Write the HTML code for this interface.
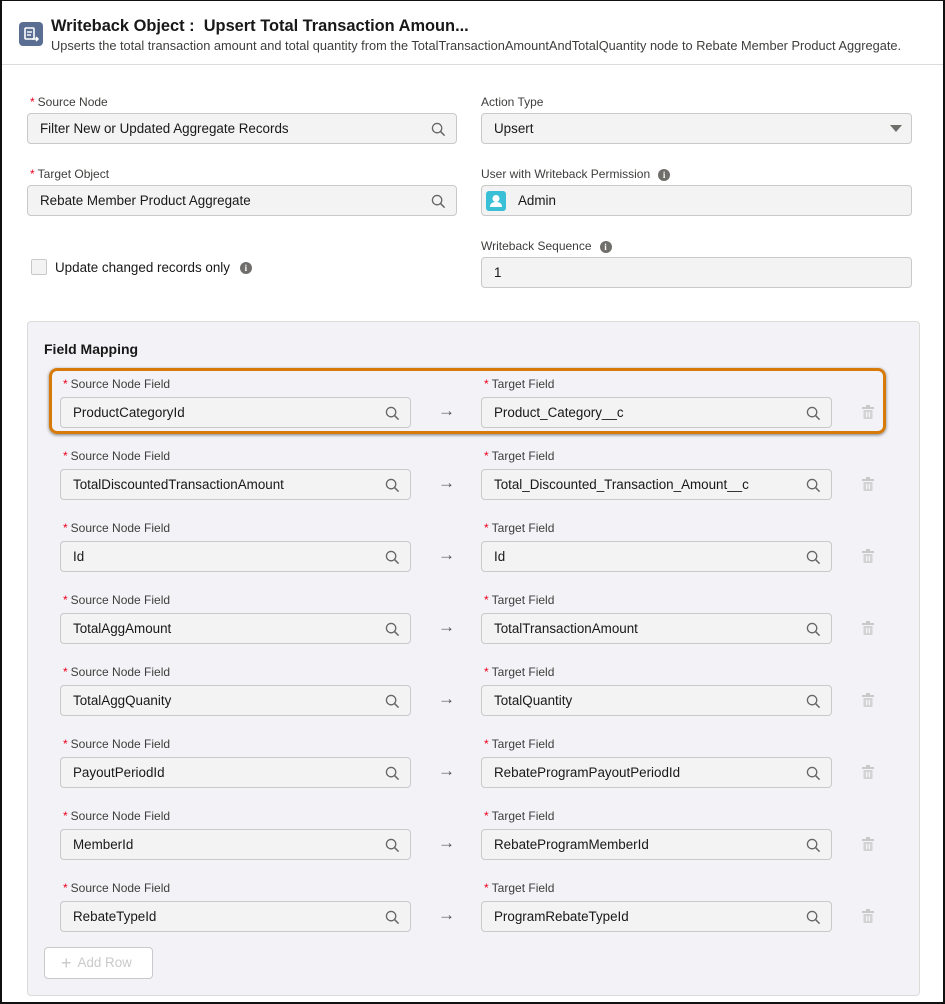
<!DOCTYPE html>
<html><head><meta charset="utf-8"><style>
*{box-sizing:border-box;margin:0;padding:0}
body{width:945px;height:1004px;background:#fff;font-family:"Liberation Sans",sans-serif;color:#181818;position:relative;overflow:hidden}
.frame{position:absolute;left:0;top:0;width:945px;height:1004px;border:2px solid #111;border-top:1px solid #111}
.a{position:absolute}
.lbl{position:absolute;font-size:12px;color:#3e3e3c;white-space:nowrap}
.lbl b{color:#ea001e;font-weight:normal;margin-right:3px}
.inp{position:absolute;height:31px;background:#f3f3f3;border:1px solid #c9c9c9;border-radius:4px;font-size:13.4px;line-height:29px;padding-left:12px;color:#181818;white-space:nowrap}
.inp svg.s{position:absolute;right:10px;top:8px}
.info{display:inline-block;width:12px;height:12px;border-radius:50%;background:#706e6b;color:#fff;font-size:9px;font-weight:bold;text-align:center;line-height:12px;vertical-align:middle;margin-left:8px;font-family:"Liberation Serif",serif}
.arrow{position:absolute;font-size:17px;color:#555}
</style></head><body>
<div class="frame"></div>
<div class="a" style="left:19px;top:22px;width:24px;height:24px;background:#5a6e94;border-radius:4px">
<svg width="24" height="24" viewBox="0 0 24 24"><rect x="6" y="6" width="9" height="11" rx="1" fill="none" stroke="#fff" stroke-width="1.6"/><line x1="8" y1="10" x2="13" y2="10" stroke="#fff" stroke-width="1.4"/><line x1="8" y1="13" x2="12" y2="13" stroke="#fff" stroke-width="1.4"/><path d="M13 17h6M17 15l2 2-2 2" fill="none" stroke="#fff" stroke-width="1.5"/></svg></div>
<div class="a" style="left:51px;top:17px;font-size:16.4px;font-weight:bold;color:#181818;white-space:nowrap">Writeback Object :&nbsp; Upsert Total Transaction Amoun...</div>
<div class="a" style="left:51px;top:38px;font-size:12.8px;color:#3e3e3c;white-space:nowrap">Upserts the total transaction amount and total quantity from the TotalTransactionAmountAndTotalQuantity node to Rebate Member Product Aggregate.</div>
<div class="a" style="left:2px;top:64px;width:941px;height:1px;background:#dddbda"></div>

<div class="lbl" style="left:30px;top:95px"><b>*</b>Source Node</div>
<div class="inp" style="left:27px;top:113px;width:430px">Filter New or Updated Aggregate Records<svg class="s" width="15" height="15" viewBox="0 0 16 16"><circle cx="6.5" cy="6.5" r="5" fill="none" stroke="#666" stroke-width="1.4"/><line x1="10.2" y1="10.2" x2="14.5" y2="14.5" stroke="#666" stroke-width="1.6"/></svg></div>
<div class="lbl" style="left:481px;top:95px">Action Type</div>
<div class="inp" style="left:481px;top:113px;width:431px">Upsert<svg style="position:absolute;right:9px;top:11px" width="12" height="8"><path d="M0 0h12L6 7z" fill="#706e6b"/></svg></div>

<div class="lbl" style="left:30px;top:167px"><b>*</b>Target Object</div>
<div class="inp" style="left:27px;top:185px;width:430px">Rebate Member Product Aggregate<svg class="s" width="15" height="15" viewBox="0 0 16 16"><circle cx="6.5" cy="6.5" r="5" fill="none" stroke="#666" stroke-width="1.4"/><line x1="10.2" y1="10.2" x2="14.5" y2="14.5" stroke="#666" stroke-width="1.6"/></svg></div>
<div class="lbl" style="left:481px;top:167px">User with Writeback Permission<span class="info">i</span></div>
<div class="inp" style="left:481px;top:185px;width:431px;padding-left:36px">Admin
<div style="position:absolute;left:4px;top:5px;width:20px;height:20px;background:#3ac0d6;border-radius:3px"><svg width="20" height="20"><circle cx="10" cy="7.5" r="3.5" fill="#fff"/><path d="M4 16c0-4 3-5 6-5s6 1 6 5z" fill="#fff"/></svg></div></div>

<div class="a" style="left:31px;top:259px;width:16px;height:16px;border:1px solid #c9c9c9;border-radius:2px;background:#f3f3f3"></div>
<div class="a" style="left:55px;top:260px;font-size:13.4px;color:#181818">Update changed records only<span class="info" style="margin-left:10px">i</span></div>
<div class="lbl" style="left:481px;top:239px">Writeback Sequence<span class="info">i</span></div>
<div class="inp" style="left:481px;top:257px;width:431px">1</div>

<div class="a" style="left:27px;top:321px;width:893px;height:675px;background:#f3f3f7;border:1px solid #dddbda;border-radius:4px"></div>
<div class="a" style="left:44px;top:341px;font-size:14px;font-weight:bold;color:#181818">Field Mapping</div>
<div class="a" style="left:49px;top:368px;width:837px;height:66px;border:3px solid #d67a0a;border-radius:8px;box-shadow:0 1px 3px rgba(0,0,0,.5)"></div>

<div id="rows"></div>
<script>
var d=[["ProductCategoryId","Product_Category__c"],["TotalDiscountedTransactionAmount","Total_Discounted_Transaction_Amount__c"],["Id","Id"],["TotalAggAmount","TotalTransactionAmount"],["TotalAggQuanity","TotalQuantity"],["PayoutPeriodId","RebateProgramPayoutPeriodId"],["MemberId","RebateProgramMemberId"],["RebateTypeId","ProgramRebateTypeId"]];
var s='<svg class="s" width="15" height="15" viewBox="0 0 16 16"><circle cx="6.5" cy="6.5" r="5" fill="none" stroke="#666" stroke-width="1.4"/><line x1="10.2" y1="10.2" x2="14.5" y2="14.5" stroke="#666" stroke-width="1.6"/></svg>';
var h='';
d.forEach(function(r,i){var y=377+i*72;
h+='<div class="lbl" style="left:63px;top:'+y+'px"><b>*</b>Source Node Field</div>';
h+='<div class="inp" style="left:60px;top:'+(y+20)+'px;width:351px">'+r[0]+s+'</div>';
h+='<div class="arrow" style="left:438px;top:'+(y+24)+'px">&#8594;</div>';
h+='<div class="lbl" style="left:484px;top:'+y+'px"><b>*</b>Target Field</div>';
h+='<div class="inp" style="left:481px;top:'+(y+20)+'px;width:351px">'+r[1]+s+'</div>';
h+='<svg class="a" style="left:862px;top:'+(y+28)+'px" width="12" height="14"><rect x="0" y="2" width="12" height="2" fill="#c9c9c9"/><rect x="4" y="0" width="4" height="2" fill="#c9c9c9"/><rect x="1.5" y="5" width="9" height="9" fill="#d3d3d3"/><rect x="4" y="7" width="1.3" height="5" fill="#f3f3f7"/><rect x="6.7" y="7" width="1.3" height="5" fill="#f3f3f7"/></svg>';
});
document.getElementById('rows').innerHTML=h;
</script>
<div class="a" style="left:44px;top:947px;width:109px;height:32px;border:1px solid #c9c9c9;border-radius:4px;background:#fff;font-size:13.4px;color:#c9c9c9;line-height:30px;padding-left:16px"><span style="font-size:18px;vertical-align:-2px;margin-right:6px">+</span>Add Row</div>
</body></html>
